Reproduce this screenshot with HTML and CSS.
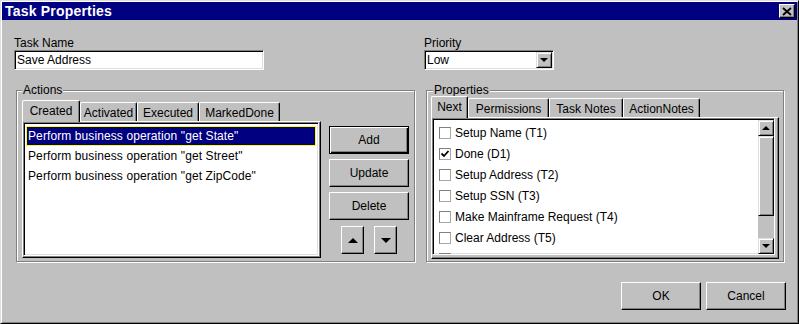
FILE: index.html
```html
<!DOCTYPE html>
<html>
<head>
    <title>Task Properties</title>
    <link rel="stylesheet" href="styles.css">
</head>
<body>
    <div class="window">
        <div class="titlebar">
            <span class="title">Task Properties</span>
            <button class="close" type="button">
                <svg width="10" height="9" viewBox="0 0 10 9"><path d="M1 1 L9 8 M9 1 L1 8" stroke="#000" stroke-width="1.8" fill="none"/></svg>
            </button>
        </div>

        <div class="content">
            <div class="fields">
                <div class="field field-name">
                    <label for="taskName">Task Name</label>
                    <div class="textbox" id="taskName">Save Address</div>
                </div>
                <div class="field">
                    <label for="priority">Priority</label>
                    <div class="combo" id="priority">
                        <span class="combo-text">Low</span>
                        <span class="drop"><span class="tri-down"></span></span>
                    </div>
                </div>
            </div>

            <div class="groups">
                <fieldset class="group actions">
                    <legend>Actions</legend>
                    <div class="actions-body">
                        <div class="tabbox">
                            <div class="tabs">
                                <div class="tab selected" style="width: 58px">Created</div>
                                <div class="tab" style="width: 57px">Activated</div>
                                <div class="tab" style="width: 62px">Executed</div>
                                <div class="tab" style="width: 81px">MarkedDone</div>
                            </div>
                            <div class="tabpanel actions-panel">
                                <div class="listbox">
                                    <div class="item selected">Perform business operation "get State"</div>
                                    <div class="item">Perform business operation "get Street"</div>
                                    <div class="item">Perform business operation "get ZipCode"</div>
                                </div>
                            </div>
                        </div>
                        <div class="side-buttons">
                            <button class="btn default" type="button">Add</button>
                            <button class="btn" type="button">Update</button>
                            <button class="btn" type="button">Delete</button>
                            <div class="arrows">
                                <button class="btn arrow" type="button"><span class="tri-up big"></span></button>
                                <button class="btn arrow" type="button"><span class="tri-down big"></span></button>
                            </div>
                        </div>
                    </div>
                </fieldset>

                <fieldset class="group props">
                    <legend>Properties</legend>
                    <div class="tabs props-tabs">
                        <div class="tab selected" style="width: 37px">Next</div>
                        <div class="tab" style="width: 81px">Permissions</div>
                        <div class="tab" style="width: 74px">Task Notes</div>
                        <div class="tab" style="width: 77px">ActionNotes</div>
                    </div>
                    <div class="tabpanel props-panel">
                        <div class="listbox checklist">
                            <div class="checks">
                                <div class="check"><span class="box"></span>Setup Name (T1)</div>
                                <div class="check"><span class="box"><svg width="10" height="10" viewBox="0 0 10 10"><path d="M1.5 4.5 L4 7 L8.5 2" stroke="#000" stroke-width="1.8" fill="none"/></svg></span>Done (D1)</div>
                                <div class="check"><span class="box"></span>Setup Address (T2)</div>
                                <div class="check"><span class="box"></span>Setup SSN (T3)</div>
                                <div class="check"><span class="box"></span>Make Mainframe Request (T4)</div>
                                <div class="check"><span class="box"></span>Clear Address (T5)</div>
                                <div class="check"><span class="box"></span>Read Mainframe Data (T6)</div>
                            </div>
                            <div class="scrollbar">
                                <div class="sb-btn"><span class="tri-up"></span></div>
                                <div class="sb-thumb"></div>
                                <div class="sb-track"></div>
                                <div class="sb-btn"><span class="tri-down"></span></div>
                            </div>
                        </div>
                    </div>
                </fieldset>
            </div>

            <div class="footer">
                <button class="btn" type="button">OK</button>
                <button class="btn" type="button">Cancel</button>
            </div>
        </div>
    </div>
</body>
</html>
```

FILE: styles.css
```css
* {
    box-sizing: border-box;
}

body {
    margin: 0;
    font-family: "Liberation Sans", Arial, sans-serif;
    font-size: 12px;
    color: #000000;
    background-color: #c0c0c0;
}

.window {
    width: 799px;
    height: 324px;
    padding: 1px;
    background-color: #c0c0c0;
    border: 1px solid;
    border-color: #dfdfdf #000000 #000000 #dfdfdf;
    box-shadow: inset 1px 1px 0 #ffffff, inset -1px -1px 0 #808080;
}

.titlebar {
    height: 18px;
    display: flex;
    align-items: center;
    justify-content: space-between;
    padding: 0 2px 0 3px;
    background-color: #000080;
    color: #ffffff;
    font-size: 14px;
    font-weight: bold;
    letter-spacing: 0.2px;
}

.close {
    width: 16px;
    height: 14px;
    padding: 0;
    display: flex;
    align-items: center;
    justify-content: center;
    background-color: #c0c0c0;
    border: 1px solid;
    border-color: #ffffff #000000 #000000 #ffffff;
    box-shadow: inset -1px -1px 0 #808080;
}

.content {
    padding: 16px 11px 0 12px;
}

/* top fields */

.fields {
    display: flex;
}

.field-name {
    width: 410px;
}

label {
    display: block;
    line-height: 14px;
}

.textbox,
.combo {
    height: 20px;
    background-color: #ffffff;
    border: 1px solid;
    border-color: #808080 #ffffff #ffffff #808080;
    box-shadow: inset 1px 1px 0 #000000, inset -1px -1px 0 #dfdfdf;
    line-height: 16px;
    padding: 1px 2px;
    white-space: nowrap;
}

.textbox {
    width: 250px;
}

.combo {
    width: 130px;
    display: flex;
    padding-right: 1px;
}

.combo-text {
    flex: 1;
}

.drop {
    width: 16px;
    height: 16px;
    display: flex;
    align-items: center;
    justify-content: center;
    background-color: #c0c0c0;
    border: 1px solid;
    border-color: #dfdfdf #000000 #000000 #dfdfdf;
    box-shadow: inset 1px 1px 0 #ffffff, inset -1px -1px 0 #808080;
}

.tri-down,
.tri-up {
    width: 0;
    height: 0;
    border-left: 4px solid transparent;
    border-right: 4px solid transparent;
}

.tri-down {
    border-top: 4px solid #000000;
}

.tri-up {
    border-bottom: 4px solid #000000;
}

.tri-down.big {
    border-left-width: 5px;
    border-right-width: 5px;
    border-top-width: 5px;
}

.tri-up.big {
    border-left-width: 5px;
    border-right-width: 5px;
    border-bottom-width: 5px;
}

/* group boxes */

.groups {
    display: flex;
    gap: 11px;
    margin-top: 13px;
    margin-left: 2px;
}

.group {
    margin: 0;
    min-width: 0;
    border: 1px solid #808080;
    box-shadow: inset 1px 1px 0 #ffffff, 1px 1px 0 #ffffff;
}

.group legend {
    padding: 0 1px;
    line-height: 14px;
    background-color: #c0c0c0;
}

.actions {
    width: 399px;
    padding: 3px 5px 3px 5px;
}

.props {
    width: 358px;
    padding: 0 4px 2px 4px;
}

.props legend {
    margin-left: 2px;
}

.actions-body {
    display: flex;
}

.tabbox {
    width: 300px;
}

/* tabs */

.tabs {
    display: flex;
    align-items: flex-end;
    height: 21px;
}

.props-tabs {
    margin-top: -1px;
}

.tab {
    height: 19px;
    padding-top: 3px;
    line-height: 14px;
    text-align: center;
    white-space: nowrap;
    border-top: 1px solid #ffffff;
    border-left: 1px solid #ffffff;
    border-right: 1px solid #000000;
    border-radius: 2px 2px 0 0;
    box-shadow: inset -1px 0 0 #808080;
}

.tab.selected {
    height: 22px;
    margin-bottom: -1px;
    position: relative;
    z-index: 1;
    background-color: #c0c0c0;
}

.tabpanel {
    border: 1px solid;
    border-color: #ffffff #000000 #000000 #ffffff;
    box-shadow: inset -1px -1px 0 #808080;
}

.actions-panel {
    height: 137px;
}

.props-panel {
    width: 348px;
    height: 142px;
}

.listbox {
    height: calc(100% - 1px);
    margin-right: 1px;
    background-color: #ffffff;
    border: 1px solid;
    border-color: #808080 #ffffff #ffffff #808080;
    box-shadow: inset 1px 1px 0 #000000, inset -1px -1px 0 #dfdfdf;
    padding: 3px 2px;
    overflow: hidden;
}

.item {
    height: 20px;
    line-height: 18px;
    padding: 0 1px;
    border: 1px solid transparent;
    white-space: nowrap;
    letter-spacing: 0.1px;
}

.item.selected {
    background-color: #000080;
    border-color: #ffff00;
    color: #ffffff;
}

/* side buttons */

.side-buttons {
    margin-left: 8px;
    padding-top: 26px;
    display: flex;
    flex-direction: column;
    gap: 5px;
}

.btn {
    width: 80px;
    height: 28px;
    padding: 0;
    font-family: "Liberation Sans", Arial, sans-serif;
    font-size: 12px;
    color: #000000;
    background-color: #c0c0c0;
    border: 1px solid;
    border-color: #ffffff #000000 #000000 #ffffff;
    box-shadow: inset -1px -1px 0 #808080;
}

.btn.default {
    border-color: #000000;
    box-shadow: inset 1px 1px 0 #ffffff, inset -1px -1px 0 #000000, inset -2px -2px 0 #808080;
}

.arrows {
    display: flex;
    justify-content: center;
    gap: 10px;
    margin-top: 1px;
}

.btn.arrow {
    width: 23px;
    display: flex;
    align-items: center;
    justify-content: center;
}

/* properties check list */

.checklist {
    display: flex;
    height: calc(100% - 3px);
    margin-right: 3px;
    padding: 0;
}

.checks {
    flex: 1;
    padding: 3px 0 0 6px;
}

.check {
    height: 21px;
    display: flex;
    align-items: center;
    white-space: nowrap;
}

.box {
    width: 12px;
    height: 12px;
    margin-right: 4px;
    display: flex;
    align-items: center;
    justify-content: center;
    border: 1px solid;
    border-color: #808080 #a8a8a8 #a8a8a8 #808080;
    background-color: #ffffff;
}

.scrollbar {
    width: 16px;
    margin-top: 1px;
    display: flex;
    flex-direction: column;
}

.sb-btn,
.sb-thumb {
    background-color: #c0c0c0;
    border: 1px solid;
    border-color: #dfdfdf #000000 #000000 #dfdfdf;
    box-shadow: inset 1px 1px 0 #ffffff, inset -1px -1px 0 #808080;
}

.sb-btn {
    height: 16px;
    display: flex;
    align-items: center;
    justify-content: center;
}

.sb-thumb {
    height: 80px;
}

.sb-track {
    flex: 1;
    background-color: #c0c0c0;
}

/* footer */

.footer {
    display: flex;
    justify-content: flex-end;
    gap: 5px;
    margin-top: 20px;
}
```
